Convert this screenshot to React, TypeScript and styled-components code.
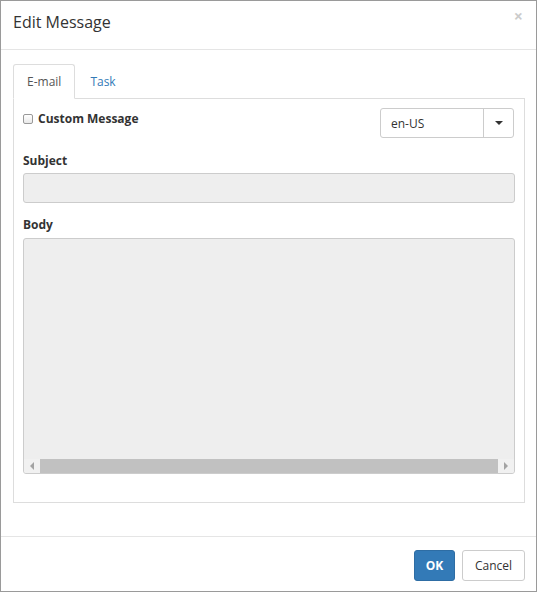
import React from "react";
import styled, { createGlobalStyle } from "styled-components";

const Global = createGlobalStyle`
  html, body { margin: 0; padding: 0; background: #fff; }
  body { font-family: "Open Sans", "Liberation Sans", sans-serif; font-size: 12px; color: #333; }
  * { box-sizing: border-box; }
`;

const Modal = styled.div`
  width: 537px;
  height: 592px;
  border: 1px solid #9a9a9a;
  display: flex;
  flex-direction: column;
  background: #fff;
`;

const Header = styled.div`
  position: relative;
  height: 49px;
  border-bottom: 1px solid #e5e5e5;
  display: flex;
  align-items: flex-start;
  padding: 9px 12px 0 12px;
`;

const Title = styled.h4`
  margin: 0;
  font-size: 16px;
  line-height: 24px;
  font-weight: 400;
  color: #333;
`;

const Close = styled.span`
  position: absolute;
  right: 13px;
  top: 4px;
  font-size: 16px;
  font-weight: 700;
  color: #000;
  opacity: 0.2;
`;

const Body = styled.div`
  flex: 1;
  padding: 13px 11px 0 12px;
`;

const TabList = styled.div`
  display: flex;
  height: 36px;
  padding-top: 1px;
  border-bottom: 1px solid #ddd;
`;

const Tab = styled.div<{ $active?: boolean }>`
  padding: 0 13px;
  display: flex;
  align-items: center;
  height: ${(p) => (p.$active ? "35px" : "34px")};
  border: 1px solid ${(p) => (p.$active ? "#ddd" : "transparent")};
  border-bottom: ${(p) => (p.$active ? "1px solid #fff" : "none")};
  border-radius: 3px 3px 0 0;
  background: #fff;
  color: ${(p) => (p.$active ? "#555" : "#337ab7")};
  margin-right: 1px;
  font-size: 12px;
`;

const Panel = styled.div`
  border: 1px solid #ddd;
  border-top: none;
  height: 404px;
  padding: 9px 9px 0 9px;
`;

const TopRow = styled.div`
  display: flex;
  justify-content: space-between;
  align-items: flex-start;
  margin-bottom: 14px;
`;

const CheckLabel = styled.label`
  display: flex;
  align-items: center;
  gap: 5px;
  font-weight: 700;
  font-size: 12px;
  margin-top: 2px;
`;

const Box = styled.span`
  width: 10px;
  height: 10px;
  border: 1px solid #999;
  border-radius: 2px;
  background: linear-gradient(#fff, #e9e9e9);
  display: inline-block;
`;

const Select = styled.div`
  display: flex;
  width: 134px;
  height: 30px;
  margin-right: 1px;
  border: 1px solid #ccc;
  border-radius: 3px;
  background: #fff;
`;

const SelectValue = styled.div`
  flex: 1;
  display: flex;
  align-items: center;
  padding-left: 10px;
  font-size: 12px;
  color: #333;
  border-right: 1px solid #ccc;
`;

const SelectButton = styled.div`
  width: 29px;
  display: flex;
  align-items: center;
  justify-content: center;
`;

const Caret = styled.span`
  width: 0;
  height: 0;
  border-left: 4px solid transparent;
  border-right: 4px solid transparent;
  border-top: 4px solid #333;
`;

const Label = styled.div`
  font-weight: 700;
  font-size: 12px;
  height: 18px;
  line-height: 18px;
  margin-bottom: 3px;
`;

const Input = styled.div`
  height: 30px;
  border: 1px solid #ccc;
  border-radius: 3px;
  background: #eee;
  margin-bottom: 13px;
`;

const BodyLabel = styled(Label)`
  margin-bottom: 4px;
`;

const TextArea = styled.div`
  height: 236px;
  border: 1px solid #ccc;
  border-radius: 3px;
  background: #eee;
  display: flex;
  flex-direction: column;
  justify-content: flex-end;
  overflow: hidden;
`;

const ScrollBar = styled.div`
  height: 14px;
  display: flex;
  align-items: stretch;
  background: #f1f1f1;
`;

const Arrow = styled.div<{ $dir: "left" | "right" }>`
  width: 16px;
  display: flex;
  align-items: center;
  justify-content: center;
  &::after {
    content: "";
    width: 0;
    height: 0;
    border-top: 4px solid transparent;
    border-bottom: 4px solid transparent;
    ${(p) => (p.$dir === "left" ? "border-right: 4px solid #a3a3a3;" : "border-left: 4px solid #a3a3a3;")}
  }
`;

const Thumb = styled.div`
  flex: 1;
  background: #c1c1c1;
`;

const Footer = styled.div`
  height: 55px;
  border-top: 1px solid #e5e5e5;
  display: flex;
  justify-content: flex-end;
  align-items: flex-start;
  padding: 13px 11px 0 0;
  gap: 7px;
`;

const Button = styled.button<{ $primary?: boolean }>`
  height: 31px;
  padding: 0;
  border-radius: 3px;
  font-family: "Open Sans", "Liberation Sans", sans-serif;
  font-size: 12px;
  font-weight: ${(p) => (p.$primary ? 700 : 400)};
  background: ${(p) => (p.$primary ? "#337ab7" : "#fff")};
  color: ${(p) => (p.$primary ? "#fff" : "#333")};
  border: 1px solid ${(p) => (p.$primary ? "#2e6da4" : "#ccc")};
  width: ${(p) => (p.$primary ? "41px" : "63px")};
`;

export default function App() {
  return (
    <>
      <Global />
      <Modal>
        <Header>
          <Title>Edit Message</Title>
          <Close>×</Close>
        </Header>
        <Body>
          <TabList>
            <Tab $active>E-mail</Tab>
            <Tab>Task</Tab>
          </TabList>
          <Panel>
            <TopRow>
              <CheckLabel>
                <Box />
                Custom Message
              </CheckLabel>
              <Select>
                <SelectValue>en-US</SelectValue>
                <SelectButton>
                  <Caret />
                </SelectButton>
              </Select>
            </TopRow>
            <Label>Subject</Label>
            <Input />
            <BodyLabel>Body</BodyLabel>
            <TextArea>
              <ScrollBar>
                <Arrow $dir="left" />
                <Thumb />
                <Arrow $dir="right" />
              </ScrollBar>
            </TextArea>
          </Panel>
        </Body>
        <Footer>
          <Button $primary>OK</Button>
          <Button>Cancel</Button>
        </Footer>
      </Modal>
    </>
  );
}
